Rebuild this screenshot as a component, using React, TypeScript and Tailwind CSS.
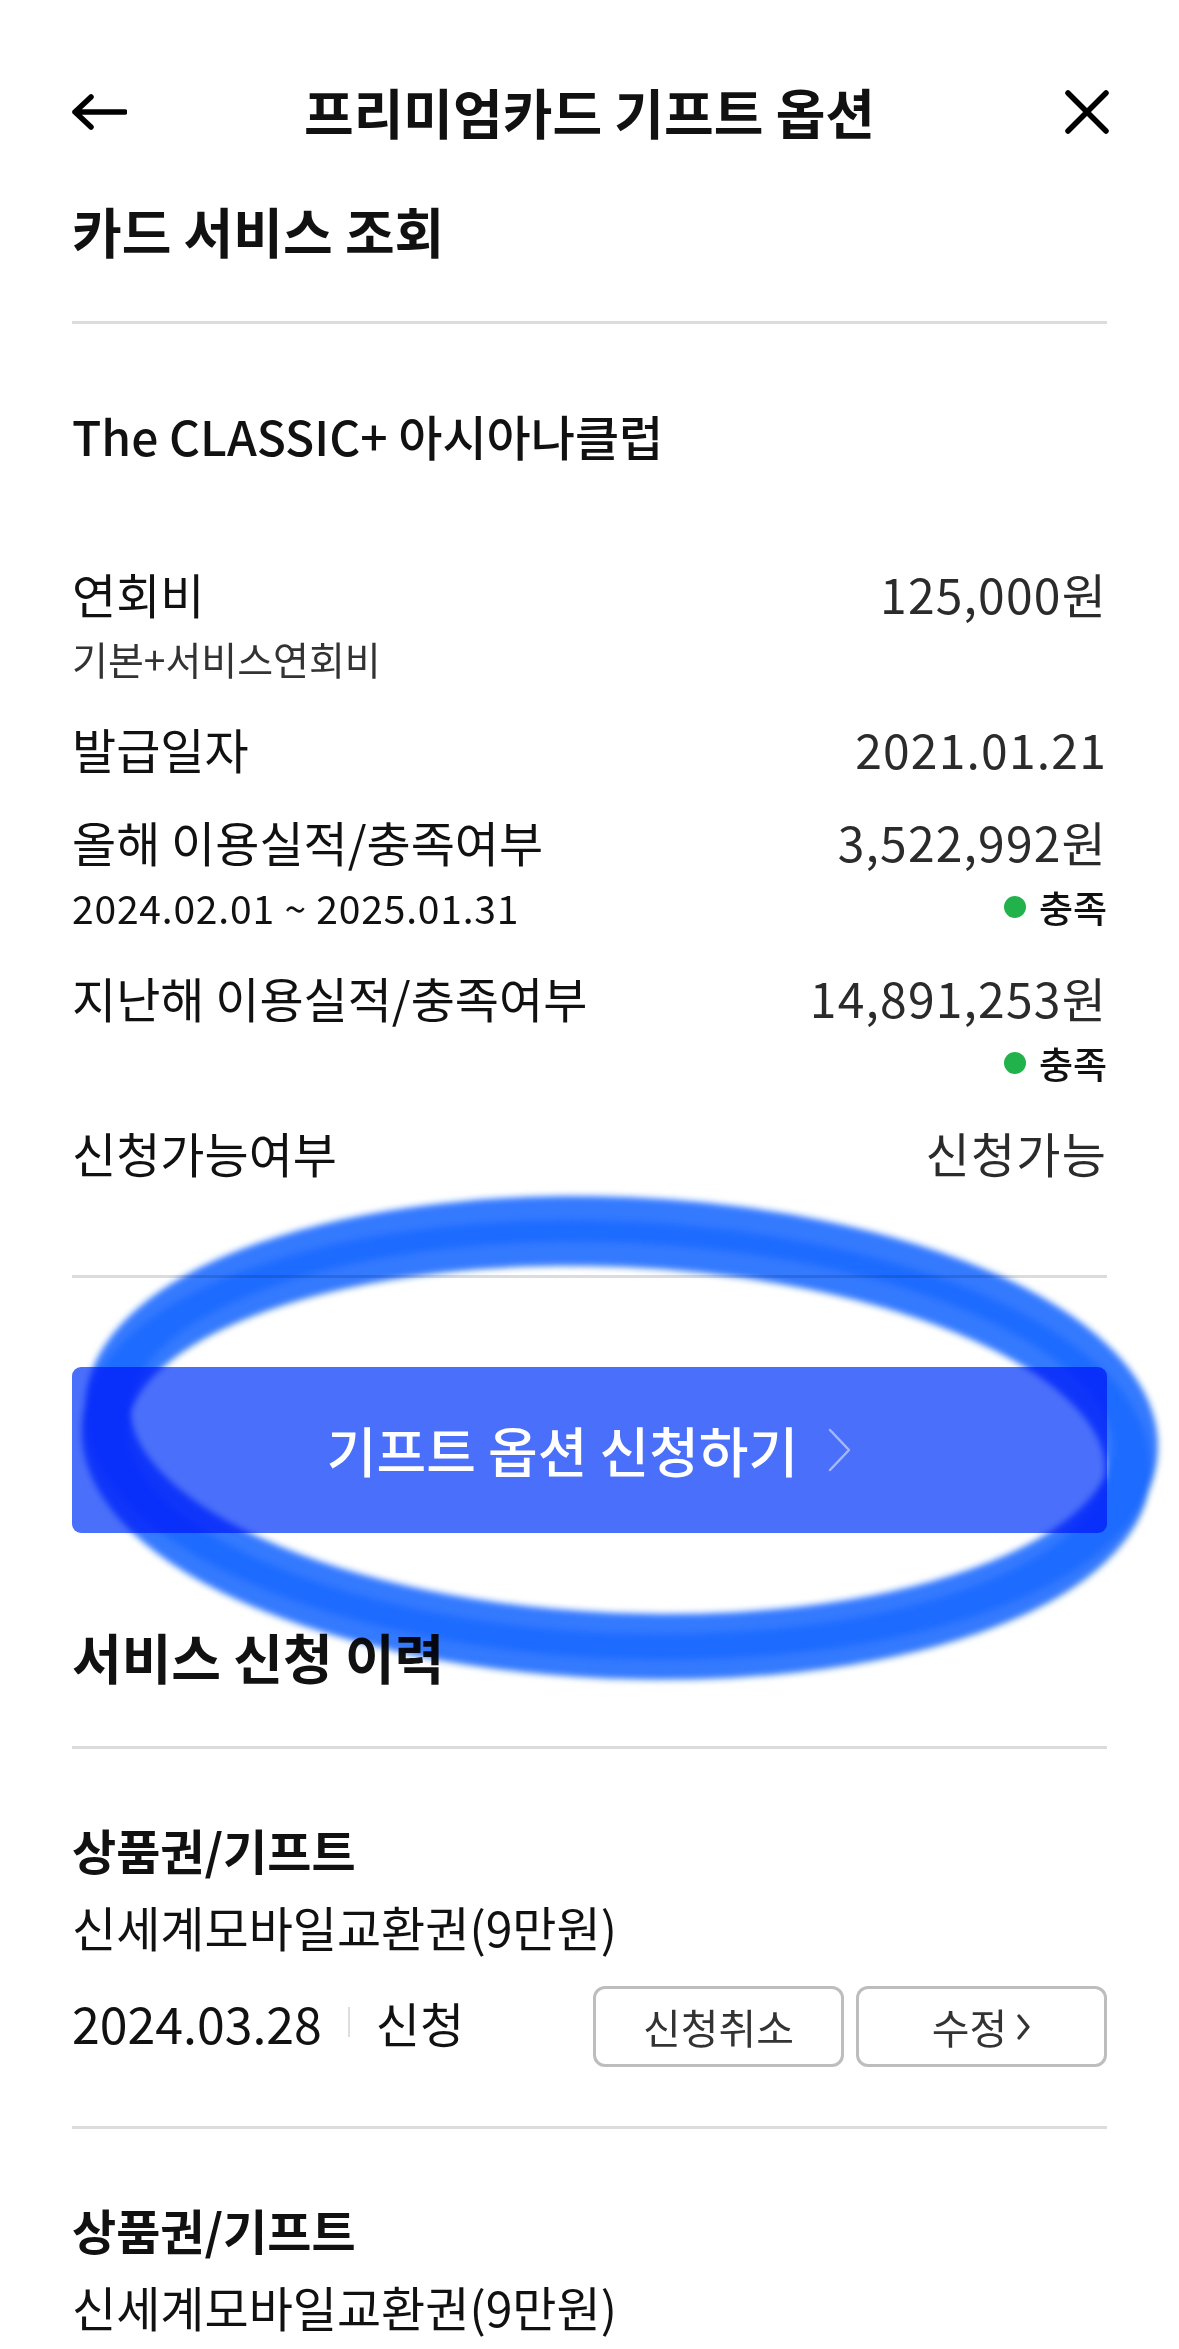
import React from 'react'

const font = "font-['Noto_Sans_CJK_KR','Noto_Sans',sans-serif]"

function Row({ label, value, className = '' }: { label: string; value: string; className?: string }) {
  return (
    <div className={`flex items-center justify-between h-[60px] ${className}`}>
      <span className="text-[48px] leading-[60px] text-[#111]">{label}</span>
      <span className="text-[48px] leading-[60px] tracking-[1.2px] text-[#2b2b2b]">{value}</span>
    </div>
  )
}

function Met() {
  return (
    <span className="flex items-center gap-[13px]">
      <span className="w-[22px] h-[22px] rounded-full bg-[#22b24c]" />
      <span className="text-[37px] leading-[48px] font-medium text-[#111]">충족</span>
    </span>
  )
}

function HistoryItem({ withActions }: { withActions?: boolean }) {
  return (
    <div>
      <div className="mt-[70px] text-[48px] leading-[60px] font-bold text-[#111]">상품권/기프트</div>
      <div className="mt-[17px] text-[48px] leading-[60px] text-[#111]">신세계모바일교환권(9만원)</div>
      {withActions && (
        <div className="mt-[30px] flex items-center justify-between h-[81px]">
          <div className="flex items-center pb-[10px]">
            <span className="text-[50px] leading-[60px] text-[#111]">2024.03.28</span>
            <span className="mx-[26px] w-[2px] h-[30px] bg-[#dedede]" />
            <span className="text-[48px] leading-[60px] text-[#111]">신청</span>
          </div>
          <div className="flex gap-[12px]">
            <button className="w-[251px] h-[81px] rounded-[12px] border-[3px] border-[#bdbdbd] text-[41px] text-[#333] bg-white">
              신청취소
            </button>
            <button className="w-[251px] h-[81px] rounded-[12px] border-[3px] border-[#bdbdbd] text-[41px] text-[#333] bg-white flex items-center justify-center gap-[10px]">
              수정
              <svg width="14" height="26" viewBox="0 0 14 26" fill="none">
                <path d="M2 2 L11 13 L2 24" stroke="#333" strokeWidth="3.2" strokeLinecap="round" strokeLinejoin="round" />
              </svg>
            </button>
          </div>
        </div>
      )}
    </div>
  )
}

export default function App() {
  return (
    <div className={`relative w-[1179px] h-[2349px] overflow-hidden bg-white ${font}`}>
      <div className="px-[72px]">
        {/* header */}
        <div className="mt-[64px] h-[96px] grid grid-cols-[1fr_auto_1fr] items-center">
          <svg width="56" height="40" viewBox="0 0 56 40" fill="none" className="-ml-[1px]">
            <path d="M4 20 H54 M20 5 L4 20 L20 35" stroke="#000" strokeWidth="5.5" strokeLinecap="round" strokeLinejoin="round" />
          </svg>
          <h1 className="text-[54px] leading-[70px] font-bold text-[#111]">프리미엄카드 기프트 옵션</h1>
          <svg width="48" height="48" viewBox="0 0 48 48" fill="none" className="justify-self-end -mr-[4px]">
            <path d="M5 5 L43 43 M43 5 L5 43" stroke="#000" strokeWidth="5.5" strokeLinecap="round" />
          </svg>
        </div>

        <h2 className="mt-[36px] text-[54px] leading-[70px] font-bold text-[#111]">카드 서비스 조회</h2>
        <div className="mt-[55px] h-[3px] bg-[#dcdcdc]" />

        <div className="mt-[79px] text-[48px] leading-[64px] font-medium text-[#111]">The CLASSIC+ 아시아나클럽</div>

        <Row className="mt-[96px]" label="연회비" value="125,000원" />
        <div className="mt-[11px] text-[39px] leading-[48px] text-[#333]">기본+서비스연회비</div>

        <Row className="mt-[36px]" label="발급일자" value="2021.01.21" />

        <Row className="mt-[33px]" label="올해 이용실적/충족여부" value="3,522,992원" />
        <div className="mt-[12px] flex items-center justify-between h-[48px]">
          <span className="text-[39px] leading-[48px] tracking-[0.8px] text-[#111]">2024.02.01 ~ 2025.01.31</span>
          <Met />
        </div>

        <Row className="mt-[36px]" label="지난해 이용실적/충족여부" value="14,891,253원" />
        <div className="mt-[12px] flex items-center justify-end h-[48px]">
          <Met />
        </div>

        <Row className="mt-[35px]" label="신청가능여부" value="신청가능" />

        <div className="mt-[93px] h-[3px] bg-[#dcdcdc]" />

        <button className="mt-[89px] w-full h-[166px] rounded-[9px] bg-[#4a6ffa] flex items-center justify-center gap-[30px]">
          <span className="text-[54px] leading-[64px] font-medium text-white">기프트 옵션 신청하기</span>
          <svg width="24" height="44" viewBox="0 0 24 44" fill="none">
            <path d="M2 2 L21 22 L2 42" stroke="#ffffff" strokeOpacity="0.5" strokeWidth="2.5" strokeLinecap="round" strokeLinejoin="round" />
          </svg>
        </button>

        <h2 className="mt-[89px] text-[54px] leading-[70px] font-bold text-[#111]">서비스 신청 이력</h2>
        <div className="mt-[54px] h-[3px] bg-[#dcdcdc]" />

        <HistoryItem withActions />
        <div className="mt-[59px] h-[3px] bg-[#dcdcdc]" />
        <HistoryItem />
      </div>

      {/* hand-drawn highlight around the button */}
      <svg
        className="absolute inset-0 pointer-events-none mix-blend-multiply"
        width="1179"
        height="2349"
        viewBox="0 0 1179 2349"
        fill="none"
      >
        <defs>
          <filter id="soft" x="-10%" y="-10%" width="120%" height="120%">
            <feGaussianBlur stdDeviation="3" />
          </filter>
        </defs>
        <g filter="url(#soft)" transform="rotate(2.5 621 1437)">
          <ellipse cx="621" cy="1428" rx="514" ry="208" stroke="#1f6cff" strokeOpacity="0.9" strokeWidth="46" />
          <ellipse cx="617" cy="1450" rx="512" ry="206" stroke="#1f6cff" strokeOpacity="0.9" strokeWidth="46" />
        </g>
      </svg>
    </div>
  )
}
